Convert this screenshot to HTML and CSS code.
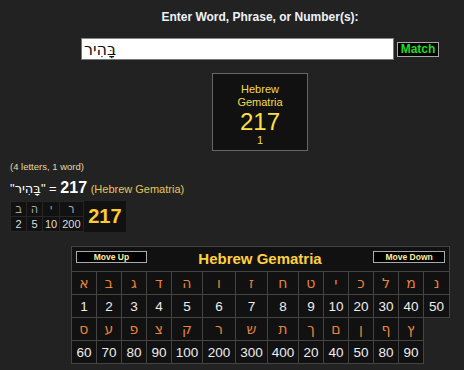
FILE: index.html
```html
<!DOCTYPE html>
<html>
	<head>
		<meta charset="UTF-8">
		<title>Gematria</title>
		<link rel="stylesheet" href="styles.css">
	</head>

	<body>
		<div class="search">
			<div class="prompt">Enter Word, Phrase, or Number(s):</div>
			<div class="search-row">
				<input class="search-input" type="text" value="בָּהִיר">
				<button class="match-btn">Match</button>
			</div>
			<div class="score-box">
				<div class="score-label">Hebrew<br>Gematria</div>
				<div class="score-value">217</div>
				<div class="score-count">1</div>
			</div>
		</div>

		<div class="results">
			<div class="counts">(4 letters, 1 word)</div>
			<div class="sum-line">"<bdi>בָּהִיר</bdi>" = <b class="sum">217</b> <span class="cipher">(Hebrew Gematria)</span></div>
			<table class="breakdown">
				<tr>
					<td class="b-letter">ב</td>
					<td class="b-letter">ה</td>
					<td class="b-letter">י</td>
					<td class="b-letter">ר</td>
					<td class="b-total" rowspan="2">217</td>
				</tr>
				<tr>
					<td class="b-num">2</td>
					<td class="b-num">5</td>
					<td class="b-num">10</td>
					<td class="b-num">200</td>
				</tr>
			</table>
		</div>

		<div class="chart">
			<table class="chart-table">
				<colgroup>
					<col style="width:25px"><col style="width:25px"><col style="width:25px"><col style="width:25px">
					<col style="width:31px"><col style="width:33px"><col style="width:32px"><col style="width:31px">
					<col style="width:25px"><col style="width:25px"><col style="width:25px"><col style="width:25px">
					<col style="width:25px"><col style="width:26px">
				</colgroup>
				<tr>
					<th class="chart-head" colspan="14">
						<div class="head-row">
							<button class="move-btn">Move Up</button>
							<span class="chart-title">Hebrew Gematria</span>
							<button class="move-btn">Move Down</button>
						</div>
					</th>
				</tr>
				<tr class="letters">
					<td>א</td><td>ב</td><td>ג</td><td>ד</td><td>ה</td><td>ו</td><td>ז</td>
					<td>ח</td><td>ט</td><td>י</td><td>כ</td><td>ל</td><td>מ</td><td>נ</td>
				</tr>
				<tr class="values">
					<td>1</td><td>2</td><td>3</td><td>4</td><td>5</td><td>6</td><td>7</td>
					<td>8</td><td>9</td><td>10</td><td>20</td><td>30</td><td>40</td><td>50</td>
				</tr>
				<tr class="letters">
					<td>ס</td><td>ע</td><td>פ</td><td>צ</td><td>ק</td><td>ר</td><td>ש</td>
					<td>ת</td><td>ך</td><td>ם</td><td>ן</td><td>ף</td><td>ץ</td>
				</tr>
				<tr class="values">
					<td>60</td><td>70</td><td>80</td><td>90</td><td>100</td><td>200</td><td>300</td>
					<td>400</td><td>20</td><td>40</td><td>50</td><td>80</td><td>90</td>
				</tr>
			</table>
		</div>
	</body>
</html>
```

FILE: styles.css
```css
html, body {
	margin: 0;
	padding: 0;
	overflow: hidden;
	background: #222;
}
* {
	box-sizing: border-box;
	font-family: 'Liberation Sans', Arial, 'DejaVu Sans', sans-serif;
}
.search {
	margin-left: 56px;
	text-align: center;
}
.prompt {
	padding-top: 10px;
	font-size: 12px;
	line-height: 14px;
	font-weight: bold;
	color: #eef2fa;
}
.search-row {
	display: flex;
	justify-content: center;
	align-items: center;
	gap: 3px;
	margin-top: 14px;
}
.search-input {
	width: 313px;
	height: 22px;
	margin: 0;
	padding: 0 2px;
	border: 1px solid #777;
	border-top-color: #888;
	background: #fff;
	color: #111;
	font-size: 16px;
	font-family: 'DejaVu Sans', sans-serif;
	outline: none;
}
.match-btn {
	width: 42px;
	height: 15px;
	margin: 0;
	padding: 0;
	border: 1px solid #aaa;
	background: #000;
	color: #22dd22;
	font-size: 12px;
	font-weight: bold;
	line-height: 13px;
}
.score-box {
	width: 96px;
	height: 78px;
	margin: 13px auto 0;
	padding-top: 9px;
	border: 1px solid #666;
	background: #111;
	color: #f4dc4c;
}
.score-label {
	font-size: 11px;
	line-height: 13px;
}
.score-value {
	margin-top: 1px;
	font-size: 24px;
	line-height: 24px;
	color: #ffe044;
}
.score-count {
	font-size: 11px;
	line-height: 12px;
}
.results {
	padding: 0 10px;
	margin-top: 10px;
}
.counts {
	font-size: 9.5px;
	line-height: 12px;
	color: #e0d8a8;
}
.sum-line {
	margin-top: 5px;
	font-size: 13px;
	line-height: 20px;
	color: #fff;
	white-space: nowrap;
}
.sum-line bdi {
	font-family: 'DejaVu Sans', sans-serif;
	font-size: 13px;
}
.sum {
	font-size: 16px;
}
.cipher {
	font-size: 11px;
	color: #e6c75a;
}
.breakdown {
	margin-top: 2px;
	border-collapse: collapse;
	background: #111;
}
.breakdown td {
	padding: 0 2px;
	text-align: center;
	font-size: 11px;
	height: 15px;
	line-height: 13px;
}
.b-letter, .b-num {
	border: 1px solid #262626;
	min-width: 16px;
}
.b-letter {
	color: #aaa;
	width: 16px;
}
.b-num {
	color: #ddd;
}
.breakdown .b-total {
	width: 43px;
	font-size: 20px;
	font-weight: bold;
	color: #ffcc33;
}
.chart {
	margin-left: 57px;
	margin-top: 14px;
}
.chart-table {
	margin: 0 auto;
	width: 378px;
	table-layout: fixed;
	border-collapse: collapse;
}
.chart-table td, .chart-head {
	border: 1px solid #444;
	background: #111;
	padding: 0;
	text-align: center;
}
.chart-head {
	padding: 3px 4px;
	height: 25px;
}
.head-row {
	display: flex;
	justify-content: space-between;
	align-items: flex-start;
}
.move-btn {
	width: 71px;
	height: 12px;
	margin: 1px 0 0;
	padding: 0;
	border: 1px solid #aaa;
	background: #000;
	color: #ffee99;
	font-size: 8.5px;
	font-weight: bold;
	line-height: 10px;
}
.move-btn:last-child {
	width: 72px;
}
.chart-title {
	font-size: 15px;
	line-height: 18px;
	font-weight: bold;
	color: #ffd040;
}
.chart-table td {
	height: 23px;
}
.letters td {
	font-size: 14px;
	color: #e8843c;
	font-family: 'DejaVu Sans', sans-serif;
}
.values td {
	font-size: 13.5px;
	color: #eee;
}
```
